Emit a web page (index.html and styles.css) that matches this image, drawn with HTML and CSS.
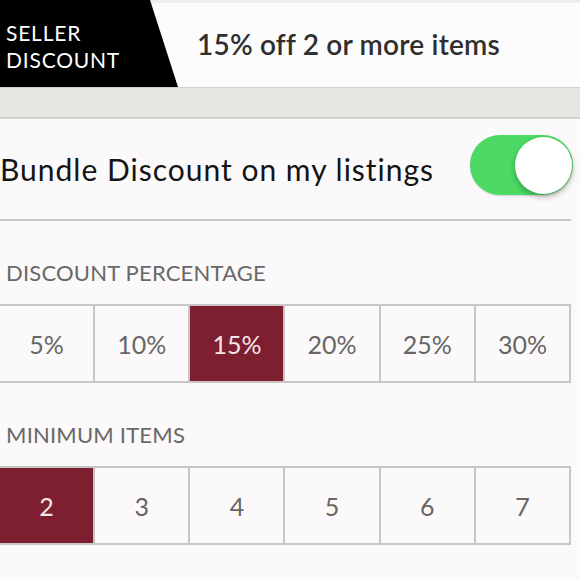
FILE: index.html
```html
<!DOCTYPE html>
<html lang="en">
<head>
<meta charset="utf-8">
<title>Seller Discount</title>
<link rel="stylesheet" href="styles.css">
</head>
<body>
  <header class="header">
    <div class="tag"><span>SELLER</span><span>DISCOUNT</span></div>
    <div class="title">15% off 2 or more items</div>
  </header>
  <div class="band"></div>
  <main class="content">
    <div class="toggle-row">
      <span class="toggle-label">Bundle Discount on my listings</span>
      <span class="toggle"><span class="knob"></span></span>
    </div>
    <div class="label">DISCOUNT PERCENTAGE</div>
    <div class="seg">
      <div class="cell">5%</div>
      <div class="cell">10%</div>
      <div class="cell active">15%</div>
      <div class="cell">20%</div>
      <div class="cell">25%</div>
      <div class="cell">30%</div>
    </div>
    <div class="label">MINIMUM ITEMS</div>
    <div class="seg">
      <div class="cell active">2</div>
      <div class="cell">3</div>
      <div class="cell">4</div>
      <div class="cell">5</div>
      <div class="cell">6</div>
      <div class="cell">7</div>
    </div>
  </main>
</body>
</html>
```
FILE: styles.css
```css
* { box-sizing: border-box; }
html, body { margin: 0; padding: 0; }
body {
  width: 580px;
  height: 580px;
  overflow: hidden;
  background: #fbf9f9;
  font-family: "Lato", "Noto Sans", sans-serif;
}
.header {
  display: flex;
  height: 87px;
  background: linear-gradient(#efeded 0 3px, #fdfcfc 3px);
}
.tag {
  width: 178px;
  flex: none;
  background: #000;
  clip-path: polygon(0 0, 150px 0, 178px 100%, 0 100%);
  color: #fff;
  display: flex;
  flex-direction: column;
  justify-content: center;
  padding: 4px 0 0 6px;
  font-size: 21px;
  line-height: 27px;
  letter-spacing: 0.8px;
}
.title {
  flex: 1;
  display: flex;
  align-items: center;
  padding-left: 19px;
  font-size: 28px;
  font-weight: 600;
  letter-spacing: 0.2px;
  color: #2f2f2f;
}
.band {
  height: 32px;
  background: #e7e5e2;
  border-top: 1px solid #d3d1ce;
  border-bottom: 2px solid #d2d0cd;
}
.content {
  margin-left: -2px;
  width: 573px;
}
.toggle-row {
  display: flex;
  align-items: center;
  justify-content: space-between;
  height: 102px;
  border-bottom: 2px solid #c9c7c7;
}
.toggle-label {
  padding-left: 2px;
  font-size: 30px;
  letter-spacing: 1px;
  color: #141414;
}
.toggle {
  width: 103px;
  height: 60px;
  margin: 0 -2px 8px 0;
  border-radius: 30px;
  background: #4cd964;
  display: flex;
  justify-content: flex-end;
  align-items: center;
  padding: 0 1px;
  box-shadow: 0 1px 2px rgba(0,0,0,0.15);
}
.knob {
  width: 57px;
  height: 57px;
  border-radius: 50%;
  background: #fff;
  box-shadow: 0 3px 6px rgba(0,0,0,0.28);
}
.label {
  padding: 40px 8px 19px;
  font-size: 22px;
  line-height: 24px;
  letter-spacing: 0.2px;
  color: #686868;
}
.seg {
  display: grid;
  grid-template-columns: repeat(6, 1fr);
  gap: 2px;
  padding: 2px;
  background: #c8c6c6;
}
.cell {
  height: 75px;
  display: flex;
  align-items: center;
  justify-content: center;
  background: #fbf9f9;
  font-size: 25px;
  color: #666;
}
.cell.active {
  background: #7d1f2e;
  color: #f3e6e8;
}
```
